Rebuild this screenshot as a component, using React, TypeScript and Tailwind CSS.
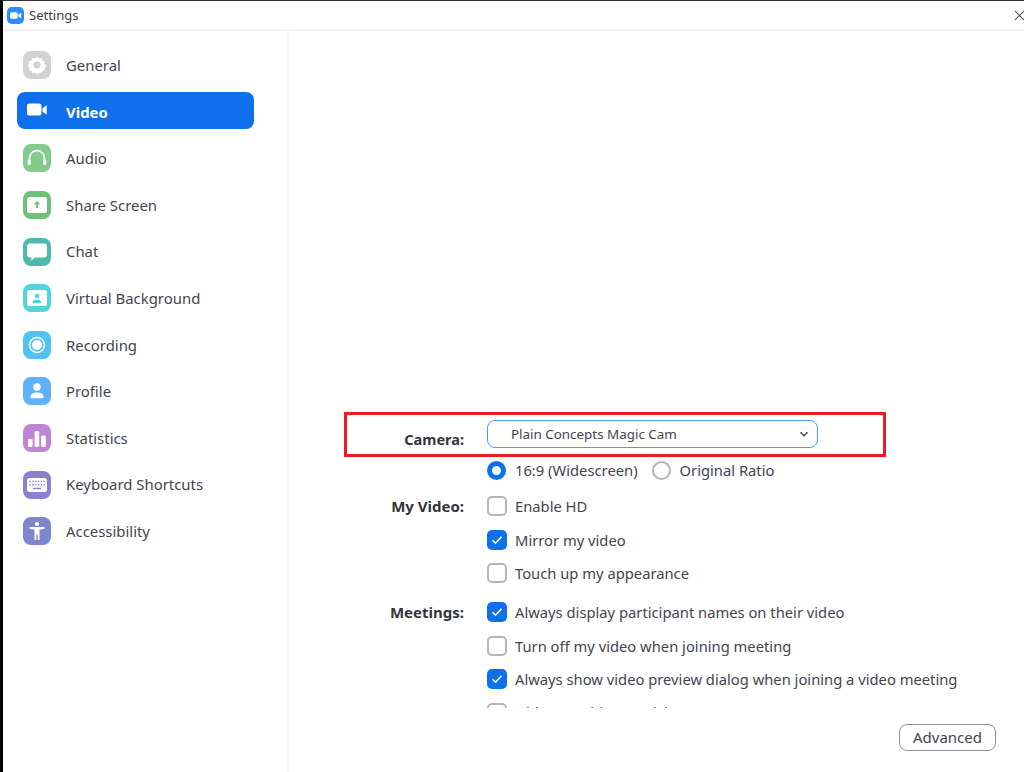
const NAV = [
  { label: 'General', color: 'bg-[#d2d2d2]', icon: 'general' },
  { label: 'Video', color: '', icon: 'video', active: true },
  { label: 'Audio', color: 'bg-[#83cb8b]', icon: 'audio' },
  { label: 'Share Screen', color: 'bg-[#6cc177]', icon: 'share' },
  { label: 'Chat', color: 'bg-[#4fb9ad]', icon: 'chat' },
  { label: 'Virtual Background', color: 'bg-[#52d3e0]', icon: 'background' },
  { label: 'Recording', color: 'bg-[#4fc4f3]', icon: 'recording' },
  { label: 'Profile', color: 'bg-[#5fb2f9]', icon: 'profile' },
  { label: 'Statistics', color: 'bg-[#c285d5]', icon: 'statistics' },
  { label: 'Keyboard Shortcuts', color: 'bg-[#8b80cf]', icon: 'keyboard' },
  { label: 'Accessibility', color: 'bg-[#7c87cf]', icon: 'accessibility' },
];

function NavGlyph({ name, tint }: { name: string; tint: string }) {
  return (
    <svg viewBox="0 0 28 28" className="w-7 h-7" fill="#fff">
      {name === 'general' && (
        <>
          <path
            fillRule="evenodd"
            d="M14 5l2.2 1.9 2.9-.4 1.1 2.7 2.7 1.1-.4 2.9L24.4 15l-1.9 2.2.4 2.4-2.7 1.1-1.1 2.4-2.9-.4L14 24.4l-2.2-1.7-2.9.4-1.1-2.4-2.7-1.1.4-2.4L3.6 15l1.9-1.8-.4-2.9 2.7-1.1 1.1-2.7 2.9.4z"
            transform="translate(1.4 1.2) scale(.9)"
          />
          <circle cx="14" cy="14" r="3.6" fill={tint} />
        </>
      )}
      {name === 'video' && (
        <>
          <rect x="4" y="7.5" width="14.5" height="12" rx="2.6" />
          <path d="M19.5 12.2l4.2-3v9.6l-4.2-3z" />
        </>
      )}
      {name === 'audio' && (
        <>
          <path d="M6.6 18v-4a7.4 7.4 0 0114.8 0v4" fill="none" stroke="#fff" strokeWidth="1.7" />
          <rect x="4.6" y="15.5" width="3.2" height="5.6" rx="1.4" />
          <rect x="20.2" y="15.5" width="3.2" height="5.6" rx="1.4" />
        </>
      )}
      {name === 'share' && (
        <>
          <rect x="4" y="6" width="20" height="16" rx="2.5" />
          <path d="M14 10l3.4 3.4h-2.5v3.6h-1.8v-3.6h-2.5z" fill={tint} />
        </>
      )}
      {name === 'chat' && (
        <path d="M7 5.5h14a3 3 0 013 3v8a3 3 0 01-3 3H12l-3.6 3.2v-3.2H7a3 3 0 01-3-3v-8a3 3 0 013-3z" />
      )}
      {name === 'background' && (
        <>
          <rect x="4" y="6" width="20" height="16" rx="2.5" />
          <circle cx="14" cy="12" r="2.3" fill={tint} />
          <path d="M9.5 19c0-2.2 2-3.4 4.5-3.4s4.5 1.2 4.5 3.4z" fill={tint} />
        </>
      )}
      {name === 'recording' && (
        <>
          <circle cx="14" cy="14" r="7.5" fill="none" stroke="#fff" strokeWidth="1.5" />
          <circle cx="14" cy="14" r="5" />
        </>
      )}
      {name === 'profile' && (
        <>
          <circle cx="14" cy="10" r="3.7" />
          <path d="M7.5 20c0-3 2.8-4.6 6.5-4.6s6.5 1.6 6.5 4.6c0 .8-.6 1.2-1.4 1.2H8.9c-.8 0-1.4-.4-1.4-1.2z" />
        </>
      )}
      {name === 'statistics' && (
        <>
          <rect x="5" y="15" width="4.6" height="8" rx="1" />
          <rect x="11.6" y="7" width="4.6" height="16" rx="1" />
          <rect x="18.2" y="11.5" width="4.6" height="11.5" rx="1" />
        </>
      )}
      {name === 'keyboard' && (
        <>
          <rect x="4" y="7" width="20" height="14" rx="2.5" />
          <path
            d="M6.5 9.8h1.4v1.4H6.5zm2.8 0h1.4v1.4H9.3zm2.8 0h1.4v1.4h-1.4zm2.8 0h1.4v1.4h-1.4zm2.8 0h1.4v1.4h-1.4zm2.8 0h1.4v1.4h-1.4zM6.5 13h1.4v1.4H6.5zm2.8 0h1.4v1.4H9.3zm2.8 0h1.4v1.4h-1.4zm2.8 0h1.4v1.4h-1.4zm2.8 0h1.4v1.4h-1.4zm2.8 0h1.4v1.4h-1.4zM10 16.8h8v1.5h-8z"
            fill={tint}
          />
        </>
      )}
      {name === 'accessibility' && (
        <>
          <circle cx="14" cy="7" r="2.1" />
          <path d="M6.5 10h15v1.8l-5 .9V23h-1.8v-5.5h-1.4V23h-1.8V12.7l-5-.9z" />
        </>
      )}
    </svg>
  );
}

const TINTS: Record<string, string> = {
  general: '#d2d2d2',
  share: '#6cc177',
  background: '#52d3e0',
  keyboard: '#8b80cf',
};

function Check({ checked }: { checked?: boolean }) {
  if (checked) {
    return (
      <span className="w-5 h-5 rounded-[5px] bg-[#0e71eb] flex items-center justify-center shrink-0">
        <svg viewBox="0 0 20 20" className="w-5 h-5" fill="none" stroke="#fff" strokeWidth="1.6">
          <path d="M5.5 10.2l3.1 3 5.9-6.4" />
        </svg>
      </span>
    );
  }
  return <span className="w-5 h-5 rounded-[5px] border-2 border-[#b4b4ba] bg-white shrink-0" />;
}

function OptionRow({ label, checked, title }: { label: string; checked?: boolean; title?: string }) {
  return (
    <div className="flex items-center h-[33.4px]">
      <div className="w-[120px] mr-[23px] text-right font-bold text-[#34343c] text-[15px] whitespace-nowrap">{title}</div>
      <Check checked={checked} />
      <span className="ml-[8px] text-[14.75px] text-[#44444e] whitespace-nowrap">{label}</span>
    </div>
  );
}

export default function App() {
  return (
    <div
      className="w-[1024px] h-[772px] bg-white border-t border-[#333] border-l-[3px] border-l-black flex flex-col overflow-hidden"
      style={{ fontFamily: '"Noto Sans", "Open Sans", sans-serif' }}
    >
      <header className="h-[30px] shrink-0 flex items-center border-b-2 border-[#f1f1f6]">
        <svg viewBox="0 0 18 18" className="w-[17px] h-[17px] ml-[4px]">
          <rect width="18" height="18" rx="5" fill="#2d8cff" />
          <rect x="3.2" y="5.5" width="8" height="7" rx="1.6" fill="#fff" />
          <path d="M12 8l3-2v6l-3-2z" fill="#fff" />
        </svg>
        <span className="ml-[5px] mt-[2px] text-[13px] text-[#3c3c44]">Settings</span>
        <svg viewBox="0 0 12 12" className="w-[11px] h-[11px] ml-auto mr-[-1px]" fill="none" stroke="#55555c" strokeWidth="1.1">
          <path d="M1 1l10 10M11 1L1 11" />
        </svg>
      </header>
      <div className="flex-1 flex min-h-0">
        <nav className="w-[286px] shrink-0 border-r-2 border-[#f1f1f6] pt-[11px] pl-[14px]">
          {NAV.map((item) => (
            <div key={item.label} className="h-[46.6px] flex items-center">
              <div
                className={`w-[237px] h-[37px] rounded-lg flex items-center pl-[6px] ${item.active ? 'bg-[#0e71eb] mb-[3px]' : ''}`}
              >
                <span className={`w-7 h-7 rounded-lg shrink-0 ${item.color}`}>
                  <NavGlyph name={item.icon} tint={TINTS[item.icon] ?? '#fff'} />
                </span>
                <span
                  className={`ml-[15px] text-[14.9px] whitespace-nowrap ${item.active ? 'mt-[3px] font-bold text-white' : 'text-[#44444e]'}`}
                >
                  {item.label}
                </span>
              </div>
            </div>
          ))}
        </nav>
        <main className="flex-1 min-w-0 flex flex-col">
          <div className="h-[677px] shrink-0 overflow-hidden pt-[381px] pl-[55px]">
            <div className="w-[542px] h-[45px] border-[3px] border-[#ed1c24] flex items-center">
              <div className="w-[117px] mr-[23px] mt-[11px] text-right font-bold text-[#34343c] text-[14.5px]">Camera:</div>
              <div className="w-[331px] h-[28px] mb-[2px] rounded-lg border border-[#4a9af5] flex items-center pl-[23px] pr-[8px] text-[13.4px] text-[#44444e]">
                <span className="mt-[2px]">Plain Concepts Magic Cam</span>
                <svg viewBox="0 0 10 10" className="w-[10px] h-[10px] ml-auto" fill="none" stroke="#44444e" strokeWidth="1.3">
                  <path d="M1.5 3.2L5 6.8l3.5-3.6" />
                </svg>
              </div>
            </div>
            <div className="flex items-center h-[26px] pl-[143px]">
              <span className="w-[19px] h-[19px] rounded-full border-[5px] border-[#0e71eb] bg-white shrink-0" />
              <span className="ml-[9px] text-[14.75px] text-[#44444e] whitespace-nowrap">16:9 (Widescreen)</span>
              <span className="ml-[14px] w-[19px] h-[19px] rounded-full border-2 border-[#b4b4ba] bg-white shrink-0" />
              <span className="ml-[9px] text-[14.75px] text-[#44444e] whitespace-nowrap">Original Ratio</span>
            </div>
            <div className="mt-[6.5px]">
              <OptionRow title="My Video:" label="Enable HD" />
              <OptionRow label="Mirror my video" checked />
              <OptionRow label="Touch up my appearance" />
            </div>
            <div className="mt-[6px]">
              <OptionRow title="Meetings:" label="Always display participant names on their video" checked />
              <OptionRow label="Turn off my video when joining meeting" />
              <OptionRow label="Always show video preview dialog when joining a video meeting" checked />
              <OptionRow label="Hide non-video participants" />
            </div>
          </div>
          <div className="flex-1 flex justify-end items-start pt-[16px] pr-[28px]">
            <button className="w-[97px] h-[27px] rounded-lg border border-[#8e8e96] text-[15px] text-[#44444e] bg-white flex items-center justify-center">
              Advanced
            </button>
          </div>
        </main>
      </div>
    </div>
  );
}
